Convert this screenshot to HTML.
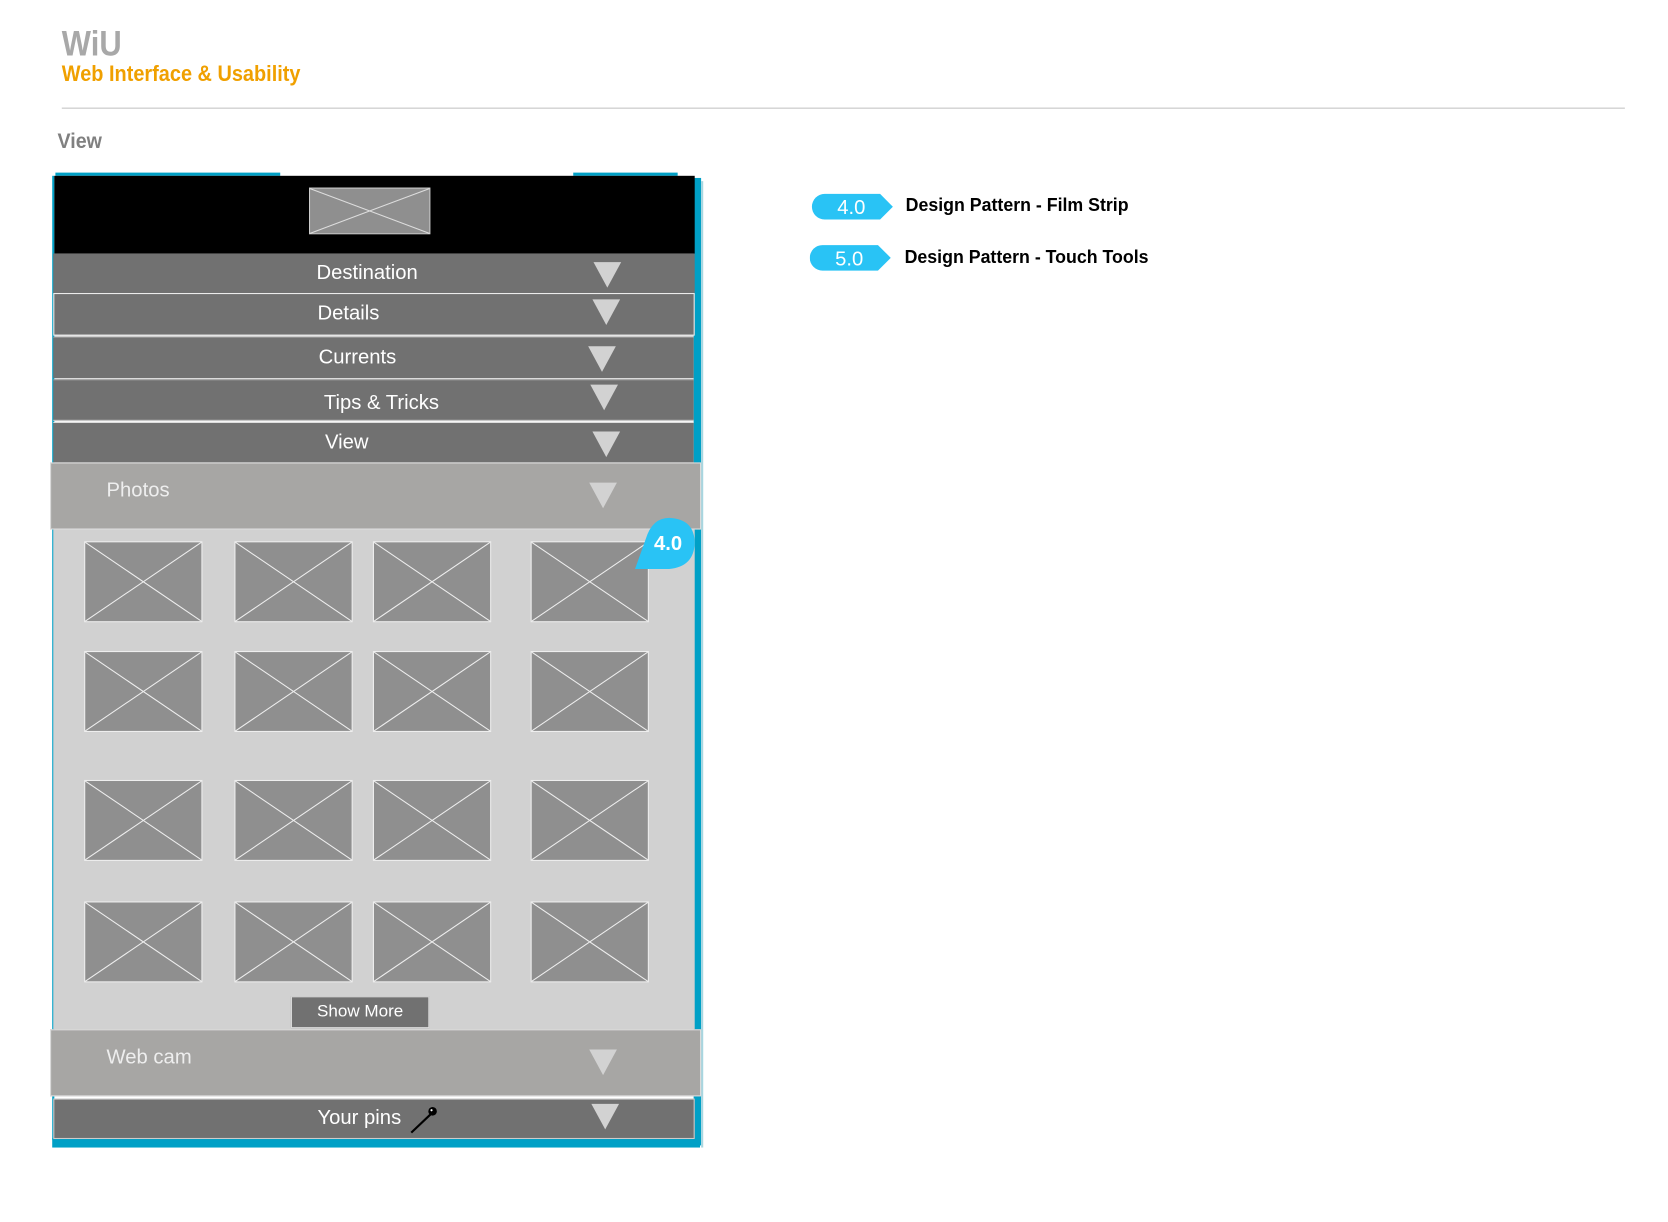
<!DOCTYPE html>
<html><head><meta charset="utf-8"><style>
*{margin:0;padding:0;box-sizing:border-box}
html,body{width:1668px;height:1222px;background:#fff;overflow:hidden;font-family:"Liberation Sans",sans-serif}
#w{position:absolute;left:0;top:0;width:1560px;height:1143px;transform:scale(1.0655);transform-origin:0 0}
.a{position:absolute}
.row{position:absolute;background:#717171;color:#fff;font-size:19px;}
.row span{position:absolute;top:50%;transform:translateY(-50%)}
.tri{position:absolute;width:0;height:0;border-left:13px solid transparent;border-right:13px solid transparent;border-top:24px solid #d2d2d2}
.lt{position:absolute;background:#a7a6a4;border:1px solid #ddd;color:#eee;font-size:19px}
.lg{position:absolute;font-weight:bold;font-size:17px;color:#000;transform:scaleX(0.98);transform-origin:0 0}
.cd{transform-origin:0 0;font-weight:bold;white-space:nowrap}
</style></head><body><div id="w">
<div class="a cd" style="left:58px;top:22px;font-size:33px;color:#a8a8a8;transform:scaleX(0.88)">WiU</div>
<div class="a cd" style="left:58px;top:58px;font-size:21px;color:#f0a000;transform:scaleX(0.89)">Web Interface &amp; Usability</div>
<div class="a" style="left:58px;top:101px;width:1467px;height:1px;background:#c4c4c4"></div>
<div class="a cd" style="left:54px;top:122px;font-size:20px;color:#808080;transform:scaleX(0.92)">View</div>

<div class="a" style="left:52px;top:162px;width:211px;height:3px;background:#00a0c6"></div>
<div class="a" style="left:538px;top:162px;width:98px;height:3px;background:#00a0c6"></div>
<div class="a" style="left:651px;top:167px;width:7px;height:908px;background:#00a0c6"></div>
<div class="a" style="left:658px;top:170px;width:2px;height:907px;background:#a8d6e0"></div>
<div class="a" style="left:49px;top:1068px;width:608px;height:9px;background:#00a0c6"></div>
<div class="a" style="left:49px;top:165px;width:2px;height:905px;background:#00a0c6"></div>

<div class="a" style="left:51px;top:165px;width:601px;height:73px;background:#000"></div>
<svg class="a" style="left:290px;top:176px" width="114" height="44"><rect x="0.5" y="0.5" width="113" height="43" fill="#8f8f8f" stroke="#ccc"/><path d="M1 1L113 43M113 1L1 43" stroke="#ddd" stroke-width="1"/></svg>

<div class="row" style="left:50px;top:238px;width:602px;height:37px"><span style="left:247px">Destination</span><div class="tri" style="left:507px;top:8px"></div></div>
<div class="row" style="left:50px;top:275px;width:602px;height:40px;border:1px solid #eee"><span style="left:247px">Details</span><div class="tri" style="left:505px;top:5px"></div></div>
<div class="row" style="left:50px;top:316px;width:601px;height:39px;border-top:1px solid #999"><span style="left:249px">Currents</span><div class="tri" style="left:502px;top:8px"></div></div>
<div class="row" style="left:50px;top:356px;width:601px;height:39px;border-top:1px solid #999;border-bottom:1px solid #ccc"><span style="left:254px;top:60%">Tips &amp; Tricks</span><div class="tri" style="left:504px;top:4px"></div></div>
<div class="row" style="left:50px;top:396px;width:601px;height:38px;border-top:1px solid #ddd"><span style="left:255px">View</span><div class="tri" style="left:506px;top:8px"></div></div>

<div class="lt" style="left:47px;top:434px;width:611px;height:63px"><span class="a" style="left:52px;top:15px">Photos</span><div class="tri" style="left:505px;top:18px"></div></div>
<div class="a" style="left:50px;top:497px;width:602px;height:469px;background:#d1d1d1"></div>

<svg class="a" style="left:0;top:0" width="700" height="1000">
<defs><g id="t"><rect x="0.5" y="0.5" width="110" height="75" fill="#8f8f8f" stroke="#eee"/><path d="M1 1L110 75M110 1L1 75" stroke="#eee" stroke-width="1"/></g></defs>
<use href="#t" x="79" y="508"/><use href="#t" x="220" y="508"/><use href="#t" x="350" y="508"/><use href="#t" x="498" y="508"/>
<use href="#t" x="79" y="611"/><use href="#t" x="220" y="611"/><use href="#t" x="350" y="611"/><use href="#t" x="498" y="611"/>
<use href="#t" x="79" y="732"/><use href="#t" x="220" y="732"/><use href="#t" x="350" y="732"/><use href="#t" x="498" y="732"/>
<use href="#t" x="79" y="846"/><use href="#t" x="220" y="846"/><use href="#t" x="350" y="846"/><use href="#t" x="498" y="846"/>
<path d="M596 534 L606 506 Q612 486 628 486 Q652 487 652 510 Q651 532 628 534 Z" fill="#29c3f5"/>
<text x="627" y="516" text-anchor="middle" font-family="Liberation Sans, sans-serif" font-weight="bold" font-size="19" fill="#fff">4.0</text>
</svg>

<div class="a" style="left:273px;top:935px;width:130px;height:30px;background:#717171;border:1px solid #ddd;color:#fff;font-size:16px;text-align:center;line-height:28px">Show More</div>

<div class="lt" style="left:47px;top:966px;width:611px;height:63px"><span class="a" style="left:52px;top:15px">Web cam</span><div class="tri" style="left:505px;top:18px"></div></div>
<div class="row" style="left:50px;top:1031px;width:602px;height:38px;border:1px solid #ccc"><span style="left:247px">Your pins</span>
<svg class="a" style="left:333px;top:5px" width="28" height="28"><path d="M2 26L21 8" stroke="#000" stroke-width="2"/><circle cx="22" cy="6" r="4" fill="#000"/><circle cx="21" cy="5" r="1" fill="#fff"/></svg>
<div class="tri" style="left:504px;top:4px"></div></div>

<svg class="a" style="left:760px;top:180px" width="90" height="80">
<path d="M14 2H66L78 14L66 26H14A12 12 0 0 1 14 2Z" fill="#29c3f5"/>
<text x="39" y="21" text-anchor="middle" font-family="Liberation Sans, sans-serif" font-size="19" fill="#fff">4.0</text>
<path d="M12 50H64L76 62L64 74H12A12 12 0 0 1 12 50Z" fill="#29c3f5"/>
<text x="37" y="69" text-anchor="middle" font-family="Liberation Sans, sans-serif" font-size="19" fill="#fff">5.0</text>
</svg>
<div class="lg" style="left:850px;top:183px">Design Pattern - Film Strip</div>
<div class="lg" style="left:849px;top:232px">Design Pattern - Touch Tools</div>
</div></body></html>
